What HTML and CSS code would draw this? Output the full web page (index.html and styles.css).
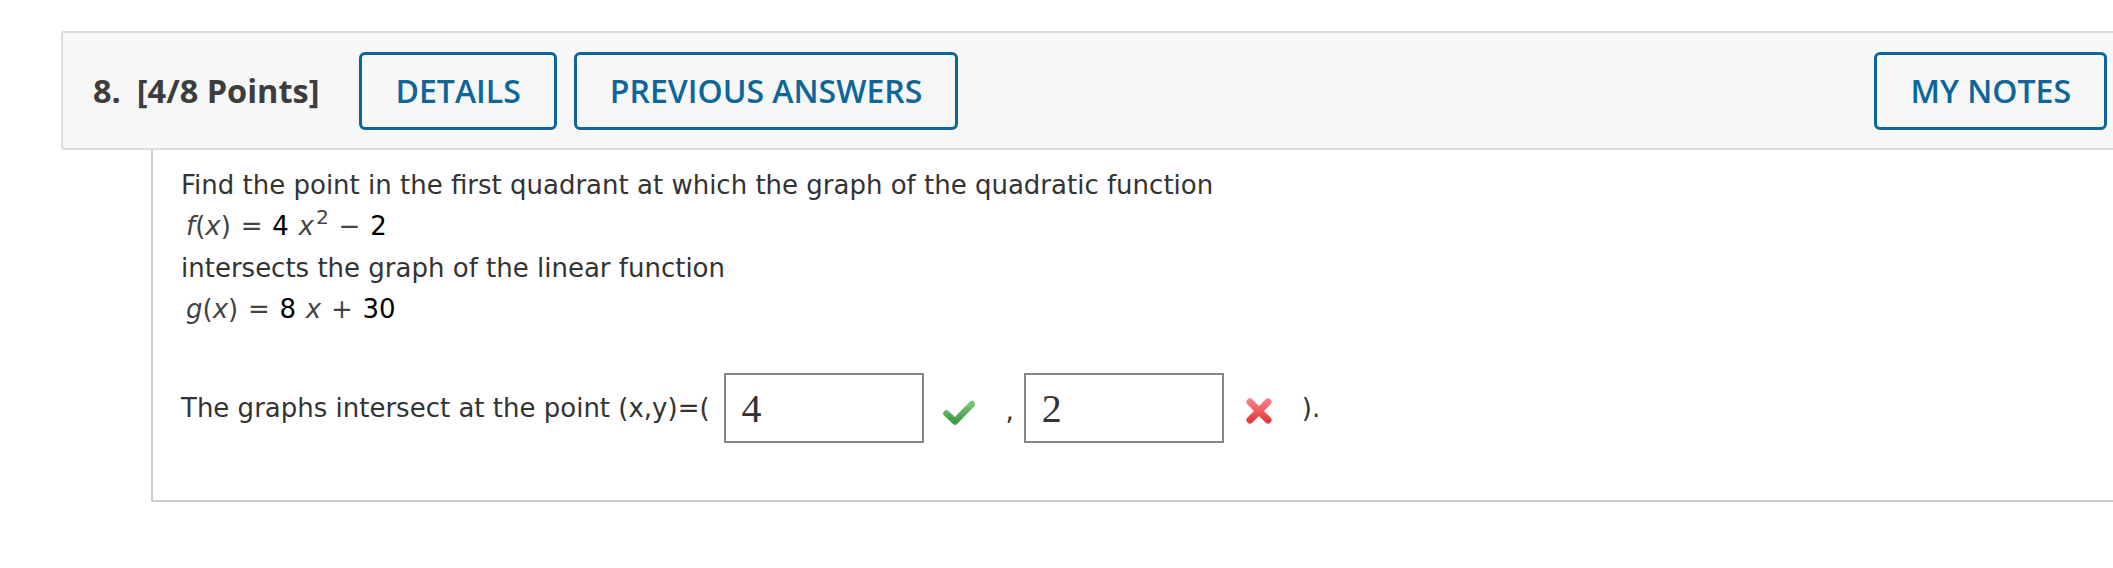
FILE: index.html
```html
<!DOCTYPE html>
<html lang="en">
<head>
<meta charset="utf-8">
<title>Question 8</title>
<link rel="stylesheet" href="styles.css">
</head>
<body>
<div class="page">
  <div class="qhead">
    <div class="qnum">8.</div>
    <div class="qpoints">[4/8 Points]</div>
    <button class="btn btn-details">DETAILS</button>
    <button class="btn btn-prev">PREVIOUS ANSWERS</button>
    <button class="btn btn-notes">MY NOTES</button>
  </div>
  <div class="qbody">
    <div class="line">Find the point in the first quadrant at which the graph of the quadratic function</div>
    <div class="line math"><i>f</i>(<i>x</i>) <span class="op">=</span> <b class="num">4</b> <i>x</i><sup>2</sup> <span class="op">&minus;</span> <b class="num">2</b></div>
    <div class="line">intersects the graph of the linear function</div>
    <div class="line math"><i>g</i>(<i>x</i>) <span class="op">=</span> <b class="num">8</b> <i>x</i> <span class="op">+</span> <b class="num">30</b></div>
    <div class="answer">
      <span class="atext">The graphs intersect at the point (x,y)=(</span>
      <span class="ibox">4</span>
      <svg class="mark check" viewBox="0 0 32 25" width="32" height="25" aria-label="correct">
        <defs>
          <linearGradient id="gc" x1="0" y1="0" x2="0" y2="1">
            <stop offset="0" stop-color="#7cc47a"/>
            <stop offset="1" stop-color="#3e9a40"/>
          </linearGradient>
        </defs>
        <path d="M3.5 13.5 L12 21.5 L29 4" fill="none" stroke="url(#gc)" stroke-width="6.5" stroke-linecap="round" stroke-linejoin="round"/>
      </svg>
      <span class="comma">,</span>
      <span class="ibox">2</span>
      <svg class="mark cross" viewBox="0 0 28 28" width="28" height="28" aria-label="incorrect">
        <defs>
          <linearGradient id="gx" x1="0" y1="0" x2="0" y2="1">
            <stop offset="0" stop-color="#f77b7e"/>
            <stop offset="1" stop-color="#e63a42"/>
          </linearGradient>
        </defs>
        <path d="M5 5 L23 23 M23 5 L5 23" fill="none" stroke="url(#gx)" stroke-width="7" stroke-linecap="round"/>
      </svg>
      <span class="close">).</span>
    </div>
  </div>
</div>
</body>
</html>
```
FILE: styles.css
```css
html, body {
  margin: 0;
  padding: 0;
  background: #ffffff;
  overflow: hidden;
}
.page {
  width: 2066px;
  padding: 31px 0 0 61px;
}
.qhead {
  display: flex;
  align-items: center;
  height: 119px;
  box-sizing: border-box;
  border: 2px solid #dddddd;
  border-radius: 3px;
  background: #f7f7f7;
  padding: 0 18px 0 30px;
  font-family: "Open Sans", "Liberation Sans", sans-serif;
}
.qnum, .qpoints {
  font-size: 32.5px;
  font-weight: 700;
  color: #3d3d3d;
}
.qnum {
  margin-right: 16px;
}
.qpoints {
  margin-right: 40px;
}
.btn {
  height: 78px;
  box-sizing: border-box;
  border: 3px solid #0c6699;
  border-radius: 6px;
  background: transparent;
  color: #0c6699;
  font-family: "Open Sans", "Liberation Sans", sans-serif;
  font-size: 32px;
  font-weight: 600;
  padding: 0 33px;
  display: flex;
  align-items: center;
}
.btn-prev {
  margin-left: 17px;
}
.btn-notes {
  margin-left: auto;
}
.qbody {
  margin-left: 90px;
  height: 352px;
  box-sizing: border-box;
  border-left: 2px solid #cccccc;
  border-bottom: 2px solid #cccccc;
  padding: 15px 0 0 28px;
  font-family: "DejaVu Sans", Verdana, sans-serif;
  font-size: 26px;
  color: #333333;
}
.line {
  line-height: 40.5px;
  white-space: nowrap;
}
.math {
  padding-left: 5px;
  color: #444444;
  word-spacing: 1.5px;
}
.math i {
  font-style: italic;
}
.math .num {
  font-weight: 400;
  color: #000000;
}
.math sup {
  font-size: 78%;
  vertical-align: 0;
  position: relative;
  top: -0.5em;
  margin-left: 2px;
}
.answer {
  display: flex;
  align-items: center;
  margin-top: 44px;
}
.atext {
  margin-right: 14px;
}
.ibox {
  width: 200px;
  height: 70px;
  box-sizing: border-box;
  border: 2px solid #868686;
  background: #ffffff;
  font-family: "Liberation Serif", "Times New Roman", serif;
  font-size: 40px;
  color: #333333;
  padding-left: 16px;
  display: flex;
  align-items: center;
}
.mark {
  display: block;
}
.check {
  margin-left: 19px;
  margin-top: 8px;
}
.comma {
  margin-left: 31px;
  margin-right: 10px;
  margin-top: 6px;
}
.cross {
  margin-left: 21px;
  margin-top: 6px;
}
.close {
  margin-left: 29px;
}
```
